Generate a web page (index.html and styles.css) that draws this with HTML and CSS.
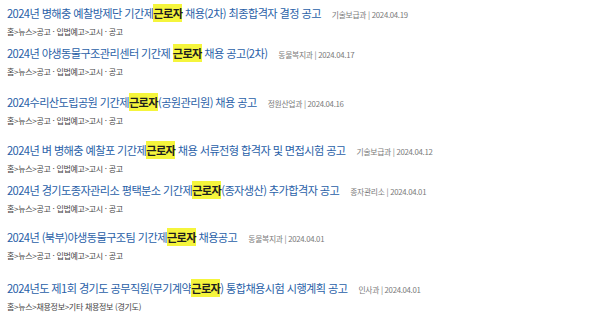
FILE: index.html
```html
<!DOCTYPE html>
<html lang="ko">
<head>
<meta charset="utf-8">
<link rel="stylesheet" href="styles.css">
</head>
<body>
<ul class="results">
  <li class="item">
    <div class="head"><a class="title">2024년 병해충 예찰방제단 기간제<mark>근로자</mark> 채용(2차) 최종합격자 결정 공고</a><span class="meta">기술보급과 | 2024.04.19</span></div>
    <div class="crumb">홈&gt;뉴스&gt;공고 · 입법예고&gt;고시 · 공고</div>
  </li>
  <li class="item mt-7">
    <div class="head"><a class="title">2024년 야생동물구조관리센터 기간제 <mark>근로자</mark> 채용 공고(2차)</a><span class="meta">동물복지과 | 2024.04.17</span></div>
    <div class="crumb">홈&gt;뉴스&gt;공고 · 입법예고&gt;고시 · 공고</div>
  </li>
  <li class="item mt-16">
    <div class="head"><a class="title">2024수리산도립공원 기간제<mark>근로자</mark>(공원관리원) 채용 공고</a><span class="meta">정원산업과 | 2024.04.16</span></div>
    <div class="crumb">홈&gt;뉴스&gt;공고 · 입법예고&gt;고시 · 공고</div>
  </li>
  <li class="item mt-15">
    <div class="head"><a class="title">2024년 벼 병해충 예찰포 기간제<mark>근로자</mark> 채용 서류전형 합격자 및 면접시험 공고</a><span class="meta">기술보급과 | 2024.04.12</span></div>
    <div class="crumb">홈&gt;뉴스&gt;공고 · 입법예고&gt;고시 · 공고</div>
  </li>
  <li class="item mt-7">
    <div class="head"><a class="title">2024년 경기도종자관리소 평택분소 기간제<mark>근로자</mark>(종자생산) 추가합격자 공고</a><span class="meta">종자관리소 | 2024.04.01</span></div>
    <div class="crumb">홈&gt;뉴스&gt;공고 · 입법예고&gt;고시 · 공고</div>
  </li>
  <li class="item mt-14">
    <div class="head"><a class="title">2024년 (북부)야생동물구조팀 기간제<mark>근로자</mark> 채용공고</a><span class="meta">동물복지과 | 2024.04.01</span></div>
    <div class="crumb">홈&gt;뉴스&gt;공고 · 입법예고&gt;고시 · 공고</div>
  </li>
  <li class="item mt-18">
    <div class="head"><a class="title">2024년도 제1회 경기도 공무직원(무기계약<mark>근로자</mark>) 통합채용시험 시행계획 공고</a><span class="meta">인사과 | 2024.04.01</span></div>
    <div class="crumb">홈&gt;뉴스&gt;채용정보&gt;기타 채용정보 (경기도)</div>
  </li>
</ul>
</body>
</html>
```

FILE: styles.css
```css
html, body {
  margin: 0;
  padding: 0;
  background: #ffffff;
}
body {
  font-family: "Noto Sans CJK KR", "Noto Sans", sans-serif;
}
.results {
  list-style: none;
  margin: 0;
  padding: 5px 0 0 7px;
}
.item {
  display: flex;
  flex-direction: column;
  gap: 5px;
}
.mt-7 { margin-top: 7px; }
.mt-14 { margin-top: 14px; }
.mt-15 { margin-top: 15px; }
.mt-16 { margin-top: 16px; }
.mt-18 { margin-top: 18px; }
.head {
  display: flex;
  align-items: baseline;
  gap: 11px;
  height: 16px;
  line-height: 16px;
}
.title {
  font-size: 11.2px;
  color: #2a5fa8;
  letter-spacing: -0.6px;
  white-space: nowrap;
}
.title mark {
  background: #f5f53c;
  color: #1e1e1e;
  font-weight: 700;
  padding: 1px 0;
}
.meta {
  font-size: 7.8px;
  color: #7a7a7a;
  letter-spacing: -0.3px;
  white-space: nowrap;
}
.crumb {
  font-size: 8px;
  color: #444;
  height: 12px;
  line-height: 12px;
  letter-spacing: -0.3px;
}
```
